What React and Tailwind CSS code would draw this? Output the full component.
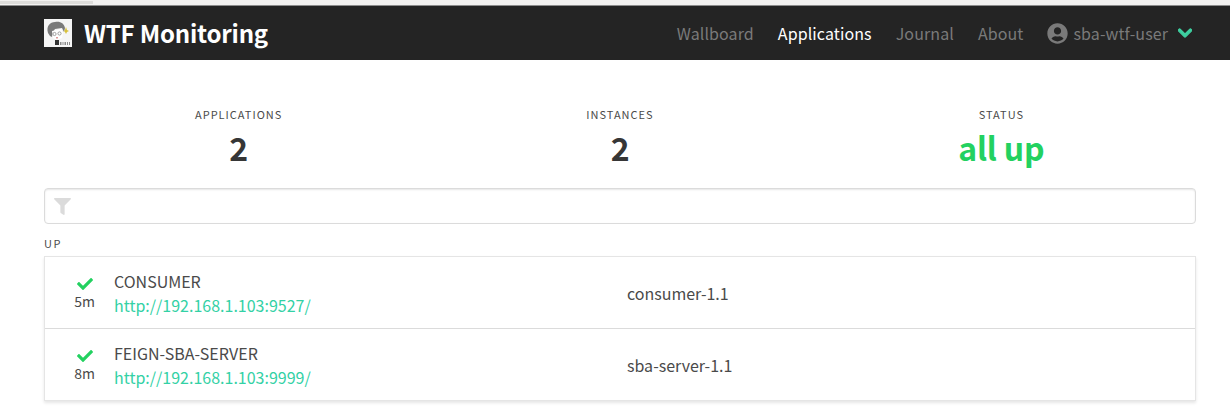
const navLinks = [
  { label: 'Wallboard', active: false },
  { label: 'Applications', active: true },
  { label: 'Journal', active: false },
  { label: 'About', active: false },
]

const stats = [
  { label: 'APPLICATIONS', value: '2', color: 'text-[#363636]' },
  { label: 'INSTANCES', value: '2', color: 'text-[#363636]' },
  { label: 'STATUS', value: 'all up', color: 'text-[#23d160]' },
]

const apps = [
  { name: 'CONSUMER', url: 'http://192.168.1.103:9527/', age: '5m', version: 'consumer-1.1' },
  { name: 'FEIGN-SBA-SERVER', url: 'http://192.168.1.103:9999/', age: '8m', version: 'sba-server-1.1' },
]

function Logo() {
  return (
    <svg width="28" height="28" viewBox="0 0 28 28" className="shrink-0">
      <rect width="28" height="28" fill="#f5f5f5" />
      <path d="M4 14C2 7 6 3 11 3c5-1 9 1 10 6l-1 4-2-4-7 1-2 3-1 5-2-1z" fill="#7a7a7a" />
      <path d="M8 12l9-2 2 4-1 5-5 2-4-2z" fill="#fff" />
      <circle cx="10.500" cy="15" r="1.600" fill="none" stroke="#8a8a8a" strokeWidth="0.800" />
      <circle cx="15.500" cy="14.500" r="1.600" fill="none" stroke="#8a8a8a" strokeWidth="0.800" />
      <path d="M12 18h2v1.500h-2z" fill="#d99" />
      <path d="M11 21h4v5h-4z" fill="#333" />
      <path d="M21 11l1-3 1 3 2 1-2 1-1 2-1-2-1-1z" fill="#d8c13a" />
      <path d="M16 23h1.500v3H16zM18.500 23h1v3h-1zM20.500 23h1.500v3h-1.500zM23 23h1v3h-1zM25 23h1v3h-1z" fill="#8a8a8a" />
    </svg>
  )
}

function UserIcon() {
  return (
    <svg width="21" height="21" viewBox="0 0 496 512" fill="#7a7a7a">
      <path d="M248 8C111 8 0 119 0 256s111 248 248 248 248-111 248-248S385 8 248 8zm0 96c48.600 0 88 39.400 88 88s-39.400 88-88 88-88-39.400-88-88 39.400-88 88-88zm0 344c-58.700 0-111.300-26.600-146.500-68.200 18.800-35.400 55.600-59.800 98.500-59.800 2.400 0 4.800.4 7.100 1.100 13 4.200 26.600 6.900 40.900 6.900 14.300 0 28-2.700 40.900-6.900 2.300-.7 4.700-1.100 7.100-1.100 42.900 0 79.700 24.400 98.500 59.800C359.300 421.400 306.700 448 248 448z" />
    </svg>
  )
}

function ChevronIcon() {
  return (
    <svg width="14" height="16" viewBox="0 0 448 512" fill="#3ecfa0" stroke="#3ecfa0" strokeWidth="36" className="ml-[10px]">
      <path d="M207.029 381.476L12.686 187.132c-9.373-9.373-9.373-24.569 0-33.941l22.667-22.667c9.357-9.357 24.522-9.375 33.901-.04L224 284.505l154.745-154.021c9.379-9.335 24.544-9.317 33.901.04l22.667 22.667c9.373 9.373 9.373 24.569 0 33.941L240.971 381.476c-9.373 9.372-24.569 9.372-33.942 0z" />
    </svg>
  )
}

function FilterIcon() {
  return (
    <svg width="17" height="17" viewBox="0 0 512 512" fill="#dbdbdb">
      <path d="M487.976 0H24.028C2.710 0-8.047 25.866 7.058 40.971L192 225.941V432c0 7.831 3.821 15.170 10.237 19.662l80 55.980C298.020 518.690 320 507.493 320 487.980V225.941l184.947-184.970C520.021 25.896 509.338 0 487.976 0z" />
    </svg>
  )
}

function CheckIcon() {
  return (
    <svg width="16" height="16" viewBox="0 0 512 512" fill="#23d160">
      <path d="M173.898 439.404l-166.400-166.400c-9.997-9.997-9.997-26.206 0-36.204l36.203-36.204c9.997-9.998 26.207-9.998 36.204 0L192 312.690 432.095 72.596c9.997-9.997 26.207-9.997 36.204 0l36.203 36.204c9.997 9.997 9.997 26.206 0 36.204l-294.400 294.401c-9.998 9.997-26.207 9.997-36.204-.001z" />
    </svg>
  )
}

export default function App() {
  return (
    <div className="h-[417px] w-[1230px] overflow-hidden bg-white font-['Noto_Sans_CJK_SC','Source_Sans_Pro',sans-serif] text-[#4a4a4a]">
      <div className="h-[6px] border-b border-[#8c8c8c] bg-[#f2f1f0]">
        <div className="h-[4px] w-[93px] border-t border-[#f2f1f0] bg-[#dddcda]" />
      </div>
      <nav className="flex h-[54px] items-center justify-between bg-[#242424] pl-11 pr-[38px]">
        <div className="flex items-center gap-3">
          <Logo />
          <span className="text-[24px] font-semibold leading-none tracking-[-0.2px] text-white">WTF Monitoring</span>
        </div>
        <div className="flex items-center gap-6 text-[16px] leading-none tracking-[0.1px] text-[#7a7a7a]">
          {navLinks.map(link => (
            <span key={link.label} className={link.active ? 'text-white' : ''}>{link.label}</span>
          ))}
          <div className="flex items-center">
            <UserIcon />
            <span className="ml-[5px]">sba-wtf-user</span>
            <ChevronIcon />
          </div>
        </div>
      </nav>
      <main className="pl-11 pr-[34px]">
        <div className="grid grid-cols-3 px-1 pt-[46px]">
          {stats.map(stat => (
            <div key={stat.label} className="flex flex-col items-center">
              <span className="text-[11px] leading-4 tracking-[1px]">{stat.label}</span>
              <span className={`mt-[5px] text-[32px] font-semibold leading-10 tracking-[-0.2px] ${stat.color}`}>{stat.value}</span>
            </div>
          ))}
        </div>
        <div className="mt-[21px] flex h-9 items-center rounded border border-[#dbdbdb] pl-[9px] shadow-[inset_0_1px_2px_rgba(10,10,10,0.1)]">
          <FilterIcon />
        </div>
        <div className="mt-[11px] text-[11px] leading-4 tracking-[1.5px]">UP</div>
        <div className="mt-[5px] border border-[#e5e5e5] shadow-[0_2px_3px_rgba(10,10,10,0.1)]">
          {apps.map((app, i) => (
            <div key={app.name} className={`flex items-center ${i > 0 ? 'h-[72px] border-t border-[#dbdbdb]' : 'h-[71px]'}`}>
              <div className="flex w-[69px] shrink-0 flex-col items-center pl-[10px] text-sm leading-4">
                <div className="mb-[1px] pl-[1px]"><CheckIcon /></div>
                <span>{app.age}</span>
              </div>
              <div className="w-[513px] shrink-0 text-base leading-6">
                <div>{app.name}</div>
                <div className="text-[#33d1a5]">{app.url}</div>
              </div>
              <div className="text-base">{app.version}</div>
            </div>
          ))}
        </div>
      </main>
    </div>
  )
}
